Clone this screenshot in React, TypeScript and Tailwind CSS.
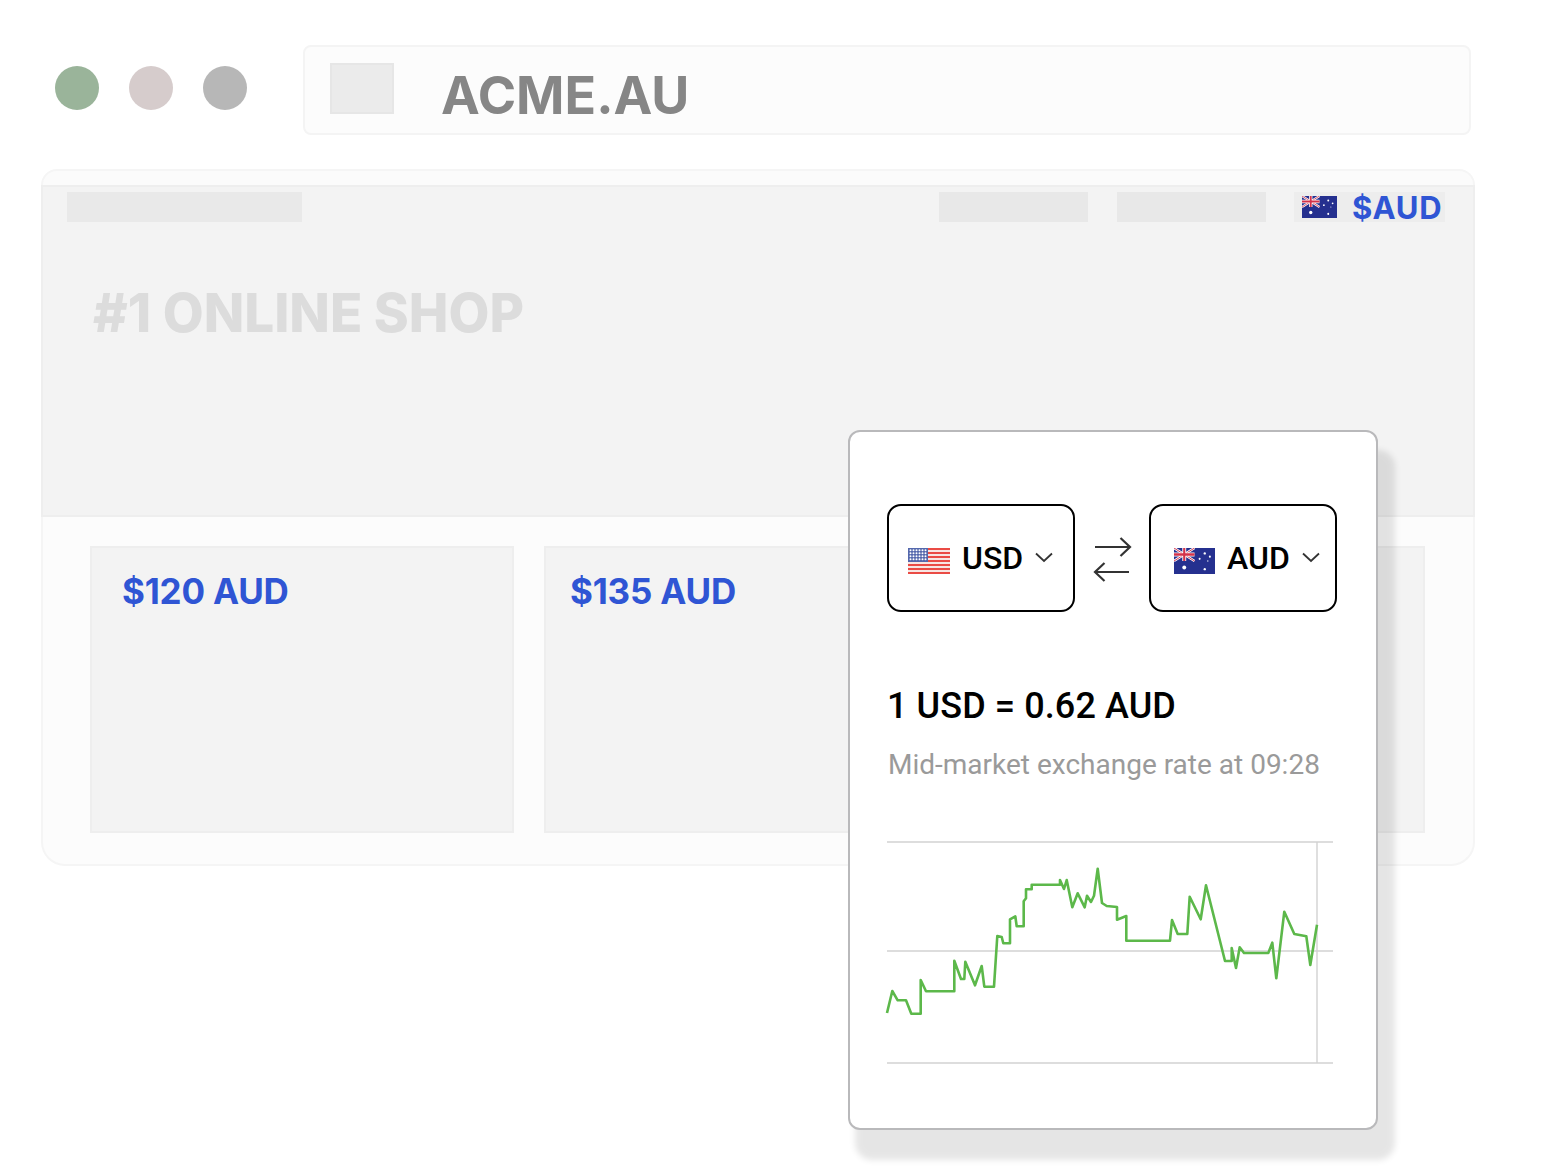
const leftPts = "21,549 37,483 53,511 78,511 94,551 122,551 122,450 138,484 223,484 223,392 243,447 253,447 256,395 285,466 305,408 313,470 342,470 352,318 365,321 370,340 390,340 390,268 406,259 410,289 431,289 431,214 438,205 438,178 455,178 455,164 540,164 540,150 552,177 560,150 577,232 593,190 614,232 621,197 633,216 642,197 653,116 666,219 680,228 711,231 711,269";
const rightPts = "21,269 49,258 49,332 180,332 186,270 203,312 232,312 239,200 272,268 288,166 345,393 365,393 365,354 378,414 389,352 402,369 475,369 487,338 499,445 523,245 553,312 589,319 601,405 621,284";

function toPage(s: string, ox: number) {
  return s
    .split(" ")
    .map((p) => {
      const [x, y] = p.split(",").map(Number);
      return `${(ox + x / 3).toFixed(1)},${(830 + y / 3).toFixed(1)}`;
    })
    .join(" ");
}
const linePoints = toPage(leftPts, 880) + " " + toPage(rightPts, 1110);

function AuFlag({ className }: { className: string }) {
  return (
    <svg viewBox="0 0 40 24" className={className} preserveAspectRatio="none">
      <rect width="40" height="24" fill="#25308f" />
      <g>
        <rect width="20" height="12" fill="#25308f" />
        <path d="M0 0 20 12M20 0 0 12" stroke="#fff" strokeWidth="2.4" />
        <path d="M0 0 20 12M20 0 0 12" stroke="#d3324a" strokeWidth="0.9" />
        <path d="M10 0V12M0 6H20" stroke="#fff" strokeWidth="3.8" />
        <path d="M10 0V12M0 6H20" stroke="#d3324a" strokeWidth="2.1" />
      </g>
      <g fill="#fff">
        <circle cx="10" cy="18" r="1.9" />
        <circle cx="30" cy="19.5" r="1.1" />
        <circle cx="30" cy="5" r="1.1" />
        <circle cx="25" cy="10" r="1" />
        <circle cx="35" cy="8" r="1" />
        <circle cx="33" cy="12" r="0.6" />
      </g>
    </svg>
  );
}

function UsFlag({ className }: { className: string }) {
  const stripes = [0, 2, 4, 6, 8, 10, 12];
  return (
    <svg viewBox="0 0 42 26" className={className} preserveAspectRatio="none">
      <rect width="42" height="26" fill="#f7e6e3" />
      {stripes.map((i) => (
        <rect key={i} y={i * 2} width="42" height="2" fill="#ea4b45" />
      ))}
      <rect width="20" height="14" fill="#5468ad" />
      <g fill="#fff">
        {[2.2, 5.2, 8.2, 11.2].map((y) =>
          [2.5, 5.5, 8.5, 11.5, 14.5, 17.5].map((x) => <circle key={`${x}-${y}`} cx={x} cy={y} r="1" />)
        )}
      </g>
    </svg>
  );
}

function Chevron() {
  return (
    <svg viewBox="0 0 18 11" className="w-[18px] h-[11px]" fill="none" stroke="#333" strokeWidth="1.8">
      <path d="M1 1.5 9 9l8-7.5" />
    </svg>
  );
}

function Swap() {
  return (
    <svg viewBox="0 0 38 46" className="w-[38px] h-[46px] overflow-visible" fill="none" stroke="#333" strokeWidth="2.2">
      <path d="M2 12H37M27.5 3 37 12 27.5 21" />
      <path d="M36 37H2M11.5 28 2 37 11.5 46" />
    </svg>
  );
}

function Card({ price, inset }: { price?: string; inset?: boolean }) {
  return (
    <div className={`h-[287px] bg-[#f3f3f3] border-2 border-[#eeeeee] pt-[21px] ${inset ? "pl-[24px]" : "pl-[30px]"}`}>
      {price && (
        <div className="text-[#2f55d4] text-[35px] leading-[44px] font-bold tracking-[-0.2px]">{price}</div>
      )}
    </div>
  );
}

export default function App() {
  return (
    <div className="relative w-[1547px] h-[1168px] bg-white overflow-hidden font-['Inter',sans-serif]">
      {/* browser top row */}
      <div className="flex items-start pt-[45px] pl-[55px]">
        <div className="flex gap-[30px] pt-[21px] mr-[56px]">
          <div className="w-[44px] h-[44px] rounded-full bg-[#9ab49a]" />
          <div className="w-[44px] h-[44px] rounded-full bg-[#d6cccc]" />
          <div className="w-[44px] h-[44px] rounded-full bg-[#b7b7b7]" />
        </div>
        <div className="w-[1168px] h-[90px] flex items-center rounded-[8px] border-2 border-[#f4f4f4] bg-[#fcfcfc] pl-[25px]">
          <div className="w-[64px] h-[51px] bg-[#ebebeb] border-2 border-[#e6e6e6] -mt-[3px]" />
          <div className="ml-[47px] text-[#868686] text-[52px] leading-none font-bold mt-[11px]">
            ACME.AU
          </div>
        </div>
      </div>

      {/* browser frame */}
      <div className="ml-[41px] mt-[34px] w-[1434px]">
        <div className="h-[16px] rounded-t-[24px] border-2 border-b-0 border-[#f5f5f5] bg-[#fbfbfb]" />
        <div className="h-[332px] bg-[#f3f3f3] border-2 border-[#eeeeee] pl-[24px] pr-[28px] pt-[5px]">
          <div className="flex items-start">
            <div className="w-[235px] h-[30px] bg-[#e9e9e9]" />
            <div className="ml-auto w-[149px] h-[30px] bg-[#e8e8e8]" />
            <div className="ml-[29px] w-[149px] h-[30px] bg-[#e8e8e8]" />
            <div className="ml-[28px] w-[151px] h-[30px] bg-[#ededed] flex items-center pl-[8px]">
              <AuFlag className="w-[35px] h-[22px]" />
              <span className="ml-[15px] text-[#2f55d4] text-[31px] leading-none font-bold tracking-[0.7px]">$AUD</span>
            </div>
          </div>
          <div className="ml-[26px] mt-[61px] text-[#dcdcdc] text-[53px] leading-[60px] font-extrabold">
            #1 ONLINE SHOP
          </div>
        </div>
        <div className="h-[349px] rounded-b-[24px] border-2 border-t-0 border-[#f5f5f5] bg-[#fcfcfc] grid grid-cols-[424px_424px_1fr] gap-[30px] pl-[47px] pr-[48px] pt-[29px]">
          <Card price="$120 AUD" />
          <Card price="$135 AUD" inset />
          <Card />
        </div>
      </div>

      {/* converter popup */}
      <div className="absolute left-[848px] top-[430px] w-[530px] h-[700px] bg-white rounded-[12px] border-2 border-[#b9b9bb] shadow-[12px_25px_6px_5px_rgba(0,0,0,0.1)] pt-[72px] pl-[37px] font-['Roboto',sans-serif]">
        <div className="flex items-center">
          <div className="w-[188px] h-[108px] rounded-[14px] border-2 border-black flex items-center pl-[19px]">
            <UsFlag className="w-[42px] h-[26px] mt-[6px]" />
            <span className="ml-[12px] text-[32px] leading-none font-medium text-black">USD</span>
            <span className="ml-[12px] -mt-[2px]"><Chevron /></span>
          </div>
          <div className="w-[74px] flex justify-center"><Swap /></div>
          <div className="w-[188px] h-[108px] rounded-[14px] border-2 border-black flex items-center pl-[23px]">
            <AuFlag className="w-[41px] h-[26px] mt-[6px]" />
            <span className="ml-[12px] text-[32px] leading-none font-medium text-black">AUD</span>
            <span className="ml-[12px] -mt-[2px]"><Chevron /></span>
          </div>
        </div>
        <div className="mt-[72px] text-[36px] leading-[44px] font-medium text-black tracking-[0.1px]">1 USD = 0.62 AUD</div>
        <div className="mt-[20px] ml-[1px] text-[28px] leading-[34px] text-[#9a9a9a] whitespace-nowrap">
          Mid-market exchange rate at 09:28
        </div>
        <svg viewBox="887 840 446 225" className="mt-[58px] w-[446px] h-[225px] overflow-visible" fill="none">
          <path d="M887 842H1333M887 951H1333M887 1063H1333M1317 842V1063" stroke="#d2d2d2" strokeWidth="1.4" />
          <polyline points={linePoints} stroke="#5cb84a" strokeWidth="2.6" strokeLinejoin="round" />
        </svg>
      </div>
    </div>
  );
}
